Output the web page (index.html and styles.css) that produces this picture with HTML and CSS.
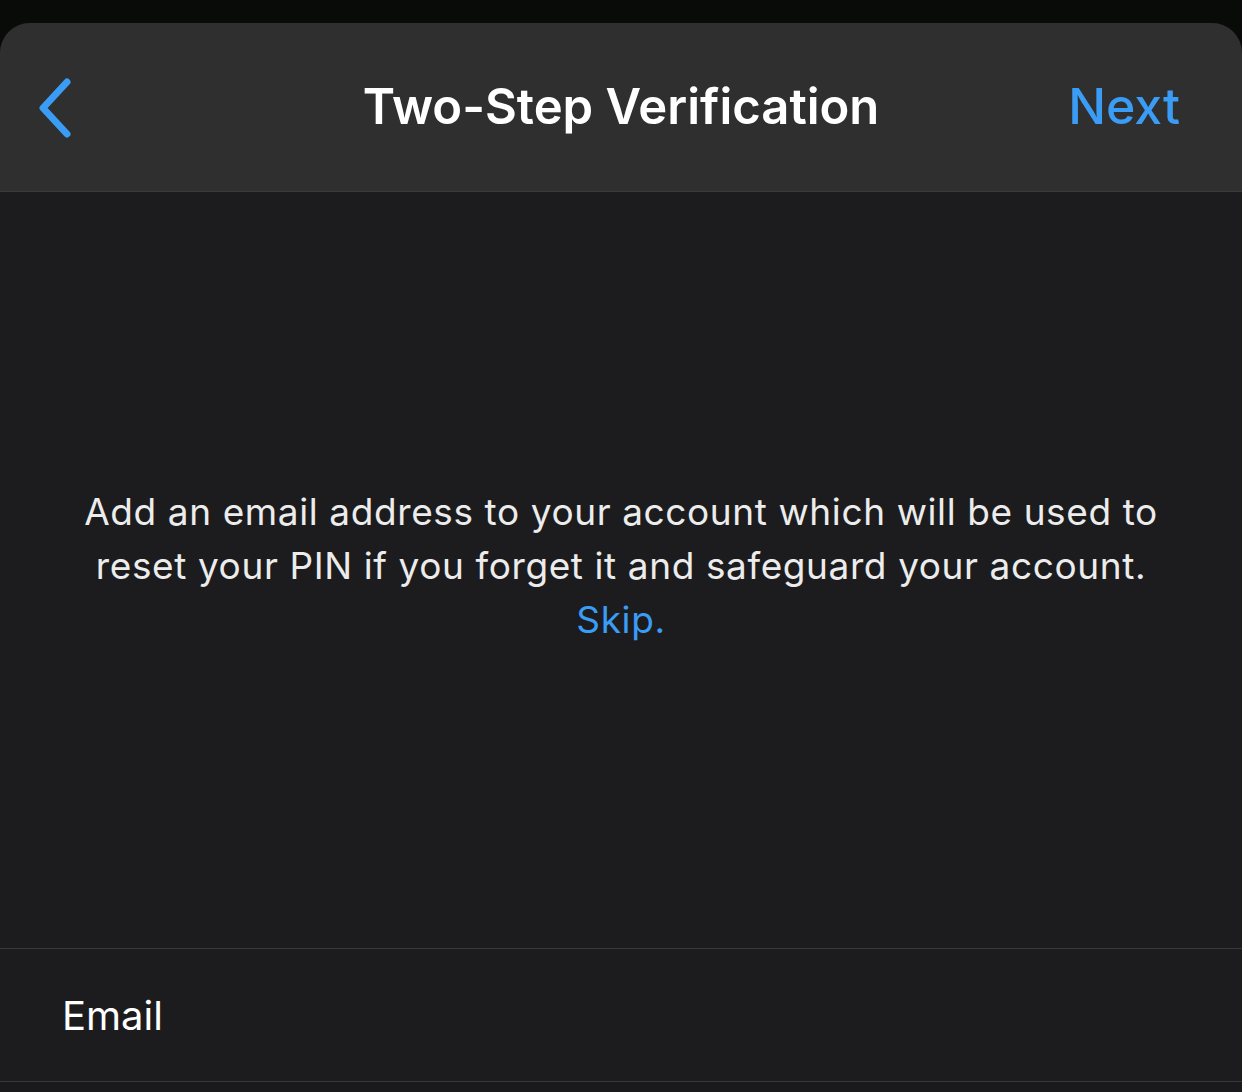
FILE: index.html
```html
<!DOCTYPE html>
<html>
<head>
<meta charset="utf-8">
<link rel="stylesheet" href="styles.css">
</head>
<body>
<div class="screen">
  <div class="sheet">
    <header class="navbar">
      <button class="back" aria-label="Back">
        <svg width="40" height="62" viewBox="0 0 40 62">
          <path d="M31 5 L7 31 L31 57" fill="none" stroke="#3a9cf4" stroke-width="7" stroke-linecap="round" stroke-linejoin="round"/>
        </svg>
      </button>
      <h1 class="title">Two-Step Verification</h1>
      <span class="next">Next</span>
    </header>
    <main class="content">
      <p class="info">Add an email address to your account which will be used to reset your PIN if you forget it and safeguard your account. <span class="link">Skip.</span></p>
    </main>
    <div class="field">
      <span class="field-label">Email</span>
    </div>
    <div class="footer"></div>
  </div>
</div>
</body>
</html>
```

FILE: styles.css
```css
html, body {
  margin: 0;
  padding: 0;
  background: #090b09;
  width: 1242px;
  height: 1092px;
  overflow: hidden;
}
.screen {
  padding-top: 23px;
  height: 1092px;
  box-sizing: border-box;
  font-family: Inter, "Noto Sans", sans-serif;
}
.sheet {
  height: 1069px;
  background: #1c1c1e;
  border-radius: 30px 30px 0 0;
  overflow: hidden;
  display: flex;
  flex-direction: column;
}
.navbar {
  height: 168px;
  background: #2f2f2f;
  border-bottom: 1px solid #3a3a3c;
  display: flex;
  align-items: center;
  justify-content: space-between;
  padding: 0 62px 0 36px;
  position: relative;
  flex-shrink: 0;
}
.back {
  background: none;
  border: 0;
  padding: 0;
  margin-top: 1px;
  display: flex;
}
.title {
  position: absolute;
  left: 0;
  right: 0;
  text-align: center;
  margin: 0;
  top: 50%;
  transform: translateY(-50%);
  margin-top: -1px;
  font-size: 49px;
  font-weight: 600;
  color: #ffffff;
  pointer-events: none;
}
.next {
  font-size: 50px;
  font-weight: 500;
  color: #3a9cf4;
  margin-top: -2px;
}
.content {
  flex: 0 0 756px;
  display: flex;
  align-items: center;
  justify-content: center;
  padding: 0 20px;
  box-sizing: border-box;
}
.info {
  margin: 0;
  margin-top: -8px;
  text-align: center;
  font-size: 37px;
  line-height: 54px;
  color: #ececec;
  max-width: 1140px;
  letter-spacing: 0.6px;
}
.link {
  color: #3a9cf4;
  display: block;
}
.field {
  height: 132px;
  border-top: 1px solid #38383a;
  border-bottom: 1px solid #38383a;
  display: flex;
  align-items: center;
  padding-left: 62px;
  flex-shrink: 0;
}
.field-label {
  font-size: 40px;
  color: #ffffff;
  margin-top: 0;
}
.footer {
  flex: 1;
  background: #1a1a1c;
}
```
